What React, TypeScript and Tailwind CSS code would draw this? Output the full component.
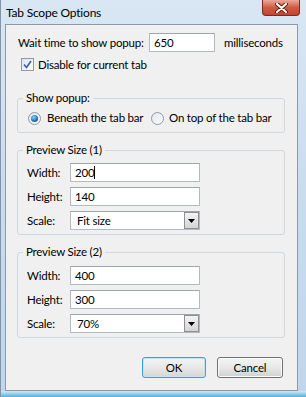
import React from "react";

const font = { fontFamily: 'Lato, "Noto Sans", sans-serif' };

function TextBox({ value, width, caret }: { value: string; width: string; caret?: boolean }) {
  return (
    <div
      className={`${width} h-[19px] bg-white border border-[#b5b9c0] border-t-[#a0a4ab] flex items-center pl-[4px] text-black`}
    >
      <span>{value}</span>
      {caret && <span className="w-px h-[13px] bg-black" />}
    </div>
  );
}

function Combo({ value }: { value: string }) {
  return (
    <div className="w-[130px] h-[19px] bg-white border border-[#b5b9c0] border-t-[#a0a4ab] flex items-center text-black">
      <span className="pl-[6px] flex-1">{value}</span>
      <div className="w-[15px] h-[17px] border border-[#8c8f94] bg-gradient-to-b from-[#f4f4f4] to-[#d4d4d4] flex items-center justify-center">
        <svg width="7" height="4" viewBox="0 0 7 4">
          <path d="M0 0 H7 L3.5 4 Z" fill="#000" />
        </svg>
      </div>
    </div>
  );
}

function Field({ label, children }: { label: string; children: React.ReactNode }) {
  return (
    <div className="flex items-center pl-[9px]">
      <span className="w-[43px] text-black">{label}</span>
      {children}
    </div>
  );
}

function Radio({ checked }: { checked?: boolean }) {
  return (
    <div className="w-[13px] h-[13px] shrink-0 rounded-full border border-[#8f9aa6] bg-gradient-to-br from-[#e4e7ea] to-[#fafbfc] flex items-center justify-center">
      {checked && (
        <div className="w-[7px] h-[7px] rounded-full bg-[radial-gradient(circle_at_40%_35%,#8fd2f7,#1b6fb0_60%,#0d3f6e)]" />
      )}
    </div>
  );
}

export default function App() {
  return (
    <div
      style={font}
      className="w-[306px] h-[397px] flex flex-col whitespace-nowrap text-[11.5px] tracking-[-0.2px] bg-gradient-to-b from-[#d9e7f4] via-[#c8dcee] to-[#bfd6ec] border-l border-[#8295a8]"
    >
      {/* title bar */}
      <div className="h-[24px] flex items-start">
        <span className="pl-[5px] pt-[4px] text-[12px] text-black">Tab Scope Options</span>
        <div className="ml-auto mr-[6px] w-[38px] h-[16px] rounded-b-[4px] border border-t-0 border-[#7a2a1e] bg-gradient-to-b from-[#e9a899] via-[#d05a42] to-[#c4452c] flex items-center justify-center">
          <svg width="13" height="10" viewBox="0 0 13 10">
            <path d="M2 1 L11 9 M11 1 L2 9" stroke="#5a1a10" strokeWidth="4" strokeLinecap="round" />
            <path d="M2 1 L11 9 M11 1 L2 9" stroke="#fff" strokeWidth="2.2" strokeLinecap="round" />
          </svg>
        </div>
      </div>

      <div className="flex flex-1 pl-[4px] pr-[8px]">
        <div className="flex-1 bg-[#f0f0f0] border border-[#8c99a6]">
          {/* wait time */}
          <div className="mt-[8px] h-[19px] flex items-center pl-[12px] text-black">
            <span className="w-[131px]">Wait time to show popup:</span>
            <TextBox value="650" width="w-[66px]" />
            <span className="ml-[9px]">milliseconds</span>
          </div>

          {/* checkbox */}
          <div className="mt-[6px] h-[13px] flex items-center pl-[15px] text-black">
            <div className="w-[13px] h-[13px] border border-[#8f9aa6] bg-gradient-to-br from-[#dfe3e8] to-[#fbfcfd] flex items-center justify-center">
              <svg width="9" height="9" viewBox="0 0 9 9">
                <path d="M1 4.5 L3.5 7.5 L8 1" stroke="#3a5ea8" strokeWidth="1.6" fill="none" />
              </svg>
            </div>
            <span className="ml-[4px]">Disable for current tab</span>
          </div>

          {/* show popup */}
          <fieldset className="mt-[19px] ml-[11px] w-[268px] border border-[#d0d7de] rounded-[3px] pb-[6px]">
            <legend className="ml-[5px] px-[3px] h-[16px] leading-[16px] text-black">Show popup:</legend>
            <div className="mt-[4px] h-[16px] flex items-center pl-[10px] text-black">
              <div className="w-[123px] flex items-center">
                <Radio checked />
                <span className="ml-[6px]">Beneath the tab bar</span>
              </div>
              <Radio />
              <span className="ml-[5px]">On top of the tab bar</span>
            </div>
          </fieldset>

          {/* preview size 1 */}
          <fieldset className="mt-[9px] ml-[11px] w-[268px] border border-[#d0d7de] rounded-[3px] pb-[4px]">
            <legend className="ml-[5px] px-[3px] h-[16px] leading-[16px] text-black">Preview Size (1)</legend>
            <div className="mt-[5px] flex flex-col gap-[5px]">
              <Field label="Width:">
                <TextBox value="200" width="w-[130px]" caret />
              </Field>
              <Field label="Height:">
                <TextBox value="140" width="w-[130px]" />
              </Field>
              <Field label="Scale:">
                <Combo value="Fit size" />
              </Field>
            </div>
          </fieldset>

          {/* preview size 2 */}
          <fieldset className="mt-[9px] ml-[11px] w-[268px] border border-[#d0d7de] rounded-[3px] pb-[4px]">
            <legend className="ml-[5px] px-[3px] h-[16px] leading-[16px] text-black">Preview Size (2)</legend>
            <div className="mt-[6px] flex flex-col gap-[5px]">
              <Field label="Width:">
                <TextBox value="400" width="w-[130px]" />
              </Field>
              <Field label="Height:">
                <TextBox value="300" width="w-[130px]" />
              </Field>
              <Field label="Scale:">
                <Combo value="70%" />
              </Field>
            </div>
          </fieldset>

          {/* buttons */}
          <div className="mt-[19px] flex justify-end gap-[11px] pr-[14px]">
            <button className="w-[64px] h-[21px] rounded-[3px] border border-[#3c9fd8] bg-gradient-to-b from-[#f4f4f4] via-[#e8e8e8] to-[#d6d6d6] text-black shadow-[inset_0_0_0_1px_#bfe6f8]">
              OK
            </button>
            <button className="w-[66px] h-[21px] rounded-[3px] border border-[#707070] bg-gradient-to-b from-[#f4f4f4] via-[#e8e8e8] to-[#d0d0d0] text-black shadow-[inset_0_0_0_1px_#fcfcfc]">
              Cancel
            </button>
          </div>
        </div>
      </div>

      {/* bottom frame */}
      <div className="h-[6px] bg-gradient-to-b from-[#d8e6f2] to-[#3fb2e6]" />
    </div>
  );
}
